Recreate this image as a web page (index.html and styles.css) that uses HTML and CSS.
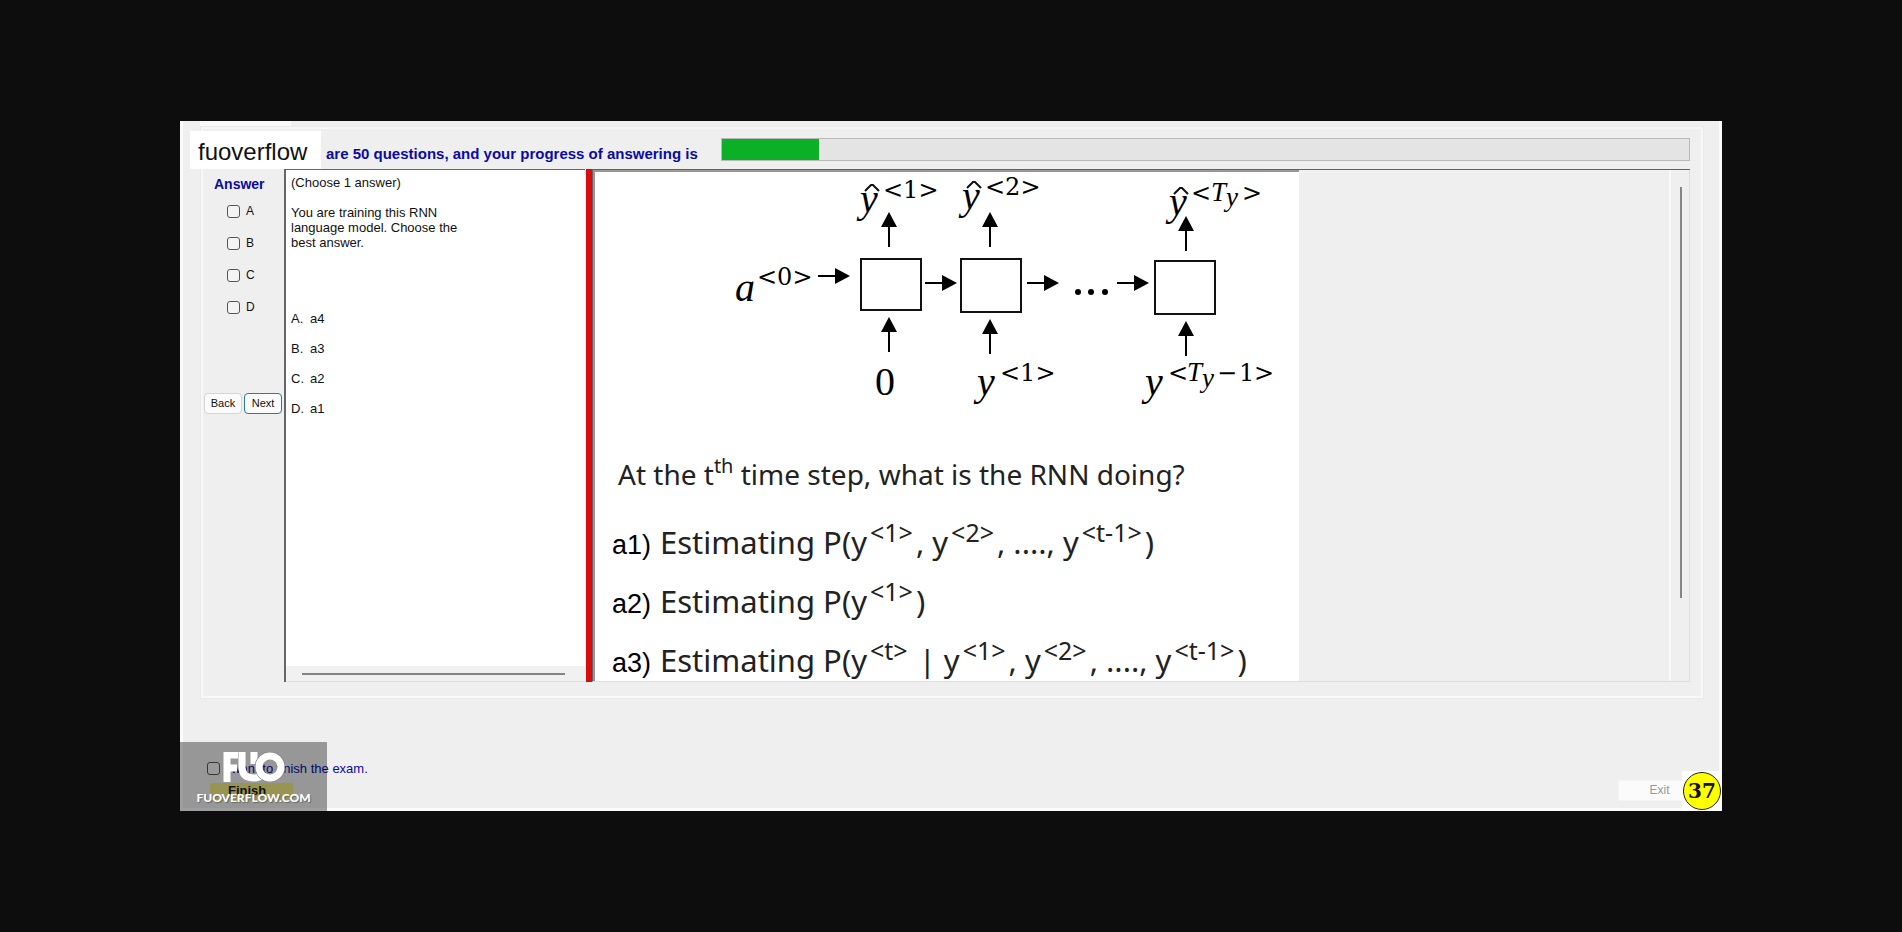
FILE: index.html
```html
<!DOCTYPE html>
<html lang="en">
<head>
<meta charset="utf-8">
<title>Exam</title>
<link rel="stylesheet" href="styles.css">
</head>
<body>
<main class="window">
  <div class="tab-strip"><span class="tab"></span></div>
  <section class="group">
    <header class="header">
      <h1 class="progress-text" id="progress-text">are 50 questions, and your progress of answering is</h1>
      <progress class="progress" value="5" max="50" aria-labelledby="progress-text"></progress>
    </header>
    <div class="workspace">
      <form class="answers">
        <h2 class="answers-title">Answer</h2>
        <div class="choices">
          <label class="choice"><input class="check" type="checkbox" name="a">A</label>
          <label class="choice"><input class="check" type="checkbox" name="b">B</label>
          <label class="choice"><input class="check" type="checkbox" name="c">C</label>
          <label class="choice"><input class="check" type="checkbox" name="d">D</label>
        </div>
        <div class="nav">
          <button class="button" type="button">Back</button>
          <button class="button button-active" type="button">Next</button>
        </div>
      </form>
      <section class="question">
        <div class="question-body">
          <p>(Choose 1 answer)</p>
          <p class="prompt">You are training this RNN language model. Choose the best answer.</p>
          <ul class="options">
            <li><span class="mark">A.</span>a4</li>
            <li><span class="mark">B.</span>a3</li>
            <li><span class="mark">C.</span>a2</li>
            <li><span class="mark">D.</span>a1</li>
          </ul>
        </div>
        <div class="hscroll"><span class="hthumb"></span></div>
      </section>
      <div class="splitter"></div>
      <section class="viewer">
        <article class="sheet">
          <svg class="diagram" viewBox="595 171 704 268" role="img" aria-label="Recurrent network diagram">
            <defs>
              <g id="up"><path d="M0 14V35" stroke="#000" stroke-width="2"/><path d="M0 0L8 15H-8Z"/></g>
              <g id="right"><path d="M0 0H18" stroke="#000" stroke-width="2"/><path d="M32 0L17 -8V8Z"/></g>
              <path id="hat" d="M0 6L6 0H8L14 6" fill="none" stroke="#111" stroke-width="2"/>
            </defs>
            <g fill="none" stroke="#111" stroke-width="2">
              <rect x="861" y="258" width="60" height="51"/>
              <rect x="961" y="258" width="60" height="53"/>
              <rect x="1155" y="260" width="60" height="53"/>
            </g>
            <use href="#up" x="889" y="211"/><use href="#up" x="990" y="211"/><use href="#up" x="1186" y="215"/>
            <use href="#up" x="889" y="316"/><use href="#up" x="990" y="318"/><use href="#up" x="1186" y="320"/>
            <use href="#right" x="818" y="275"/><use href="#right" x="925" y="282"/><use href="#right" x="1027" y="282"/><use href="#right" x="1117" y="282"/>
            <circle cx="1078" cy="291" r="3"/><circle cx="1091" cy="291" r="3"/><circle cx="1105" cy="291" r="3"/>
            <use href="#hat" x="865" y="184"/><use href="#hat" x="967" y="181"/><use href="#hat" x="1174" y="187"/>
            <g class="var">
              <text x="735" y="300">a</text>
              <text x="860" y="211">y</text>
              <text x="962" y="208">y</text>
              <text x="1169" y="214">y</text>
              <text x="977" y="394">y</text>
              <text x="1145" y="394">y</text>
            </g>
            <text class="zero" x="875" y="394">0</text>
            <g class="sup">
              <text x="757" y="284">&lt;0&gt;</text>
              <text x="883" y="197">&lt;1&gt;</text>
              <text x="985" y="194">&lt;2&gt;</text>
              <text x="1191" y="200">&lt;<tspan class="tee" x="1211">T</tspan><tspan class="wye" x="1226" y="205">y</tspan><tspan x="1242" y="200">&gt;</tspan></text>
              <text x="1000" y="380">&lt;1&gt;</text>
              <text x="1168" y="380">&lt;<tspan class="tee" x="1187">T</tspan><tspan class="wye" x="1202" y="386">y</tspan><tspan x="1217" y="380">−</tspan><tspan x="1239">1</tspan><tspan x="1254">&gt;</tspan></text>
            </g>
          </svg>
          <p class="ask">At the t<sup>th</sup> time step, what is the RNN doing?</p>
          <ul class="cases">
            <li><span class="case-mark">a1)</span>Estimating P(y<sup>&lt;1&gt;</sup>, y<sup>&lt;2&gt;</sup>, ...., y<sup>&lt;t-1&gt;</sup>)</li>
            <li><span class="case-mark">a2)</span>Estimating P(y<sup>&lt;1&gt;</sup>)</li>
            <li><span class="case-mark">a3)</span>Estimating P(y<sup>&lt;t&gt;</sup> | y<sup>&lt;1&gt;</sup>, y<sup>&lt;2&gt;</sup>, ...., y<sup>&lt;t-1&gt;</sup>)</li>
          </ul>
        </article>
        <div class="vscroll"><span class="vthumb"></span></div>
      </section>
    </div>
  </section>
  <footer class="footer">
    <div class="finish">
      <label class="finish-label"><input class="check" type="checkbox" name="finish">I want to finish the exam.</label>
      <button class="finish-button" type="button">Finish</button>
    </div>
    <button class="exit" type="button" disabled>Exit</button>
  </footer>
  <div class="name-tag">fuoverflow</div>
  <div class="watermark">
    <svg class="logo" viewBox="0 0 62 30" role="img" aria-label="FUO">
      <g fill="none" stroke="#fff">
        <path d="M4 30V3H15M4 16H14" stroke-width="7"/>
        <path d="M19 0V15Q19 26 31 26Q36 26 39 23M31 12V0" stroke-width="7"/>
        <circle cx="47" cy="15" r="15" stroke="#8a8a8a" stroke-width="1"/>
        <circle cx="47" cy="15" r="11" stroke-width="7"/>
      </g>
    </svg>
    <span class="site">FUOVERFLOW.COM</span>
  </div>
  <div class="badge"><span class="badge-disc">37</span></div>
</main>
</body>
</html>
```
FILE: styles.css
```css
* { box-sizing: border-box; }
body {
  margin: 0;
  min-height: 100vh;
  padding: 121px 180px;
  display: flex;
  background: #0d0d0d;
  color: #111;
  font: 13px/15px "Liberation Sans", Arial, sans-serif;
}
h1, h2, p, ul { margin: 0; padding: 0; }
ul { list-style: none; }
.window {
  position: relative;
  flex: 1;
  min-width: 0;
  display: flex;
  flex-direction: column;
  background: #efefef;
  border: solid #fbfbfb;
  border-width: 0 3px;
}
.tab-strip { height: 6px; padding-left: 17px; }
.tab { display: block; width: 91px; height: 6px; background: #fafafa; }
.group {
  flex: 1;
  display: flex;
  flex-direction: column;
  margin: 0 16px 0 18px;
  padding: 0 11px 14px 0;
  border: 2px solid #f8f8f8;
  outline: 1px solid #e9e9e9;
}
.header { display: flex; align-items: flex-start; height: 40px; padding: 9px 0 0 123px; }
.progress-text {
  flex: 0 0 395px;
  padding-top: 8px;
  white-space: nowrap;
  color: #0a0aa8;
  font-size: 15px;
  font-weight: bold;
}
.progress {
  appearance: none;
  flex: 1;
  min-width: 0;
  height: 23px;
  border: 1px solid #b9b9b9;
  background: #e4e4e4;
}
.progress::-webkit-progress-bar { background: #e4e4e4; }
.progress::-webkit-progress-value { background: #0bb026; }
.workspace { flex: 1; display: flex; min-height: 0; }
.answers { flex: 0 0 81px; }
.answers-title {
  padding: 8px 0 0 11px;
  color: #0a0aa8;
  font-size: 14px;
  font-weight: bold;
}
.choices { display: flex; flex-direction: column; gap: 17px; padding: 12px 0 0 24px; }
.choice { display: flex; align-items: center; gap: 6px; font-size: 12px; height: 15px; }
.check {
  appearance: none;
  width: 13px;
  height: 13px;
  margin: 0;
  border: 1px solid #555;
  border-radius: 3px;
  background: #f4f4f4;
}
.nav { display: flex; gap: 2px; padding: 78px 0 0 1px; }
.button {
  width: 38px;
  height: 21px;
  padding: 0;
  border: 1px solid #d4d4d4;
  border-radius: 4px;
  background: #fbfbfb;
  color: #111;
  font: 11px/15px "Liberation Sans", Arial, sans-serif;
}
.button-active { border-color: #2b7a9f; }
.question {
  flex: 0 0 301px;
  display: flex;
  flex-direction: column;
  border: solid #666;
  border-width: 1px 0 0 2px;
  background: #fff;
}
.question-body { flex: 1; padding: 5px; }
.prompt { width: 168px; padding-top: 15px; }
.options { display: flex; flex-direction: column; gap: 15px; padding-top: 61px; }
.mark { display: inline-block; width: 19px; }
.hscroll {
  height: 16px;
  padding: 7px 20px 0 16px;
  background: #f1f1f1;
  border-bottom: 1px solid #ddd;
}
.hthumb { display: block; height: 2px; background: #858585; }
.splitter { flex: 0 0 6px; margin-left: 1px; background: #dd0c0c; }
.viewer {
  flex: 1;
  min-width: 0;
  display: flex;
  justify-content: space-between;
  border: solid #636366;
  border-width: 1px 0 0 1px;
  border-bottom: 1px solid #ddd;
}
.sheet {
  flex: 0 0 706px;
  border: solid #98989b;
  border-width: 2px 0 0 2px;
  background: #fff;
  color: #222;
  font: 28px/40px "Noto Sans", sans-serif;
}
.diagram { display: block; width: 100%; }
.var, .zero { font: 40px "Liberation Serif", serif; }
.var { font-style: italic; }
.sup { font: 24px "DejaVu Serif", serif; }
.tee { font: italic 27px "Liberation Serif", serif; }
.wye { font: italic 27px "Liberation Serif", serif; }
.ask { padding: 14px 0 0 23px; white-space: nowrap; }
.ask sup { font-size: 20px; line-height: 0; vertical-align: 12px; }
.cases {
  display: flex;
  flex-direction: column;
  gap: 19px;
  padding: 28px 0 0 17px;
  font-size: 31px;
  line-height: 40px;
  white-space: nowrap;
}
.cases li { height: 40px; }
.cases sup { margin: 0 3px; font-size: 25px; line-height: 0; vertical-align: 12px; }
.case-mark {
  display: inline-block;
  width: 48px;
  color: #000;
  font: 27px/40px "Liberation Sans", Arial, sans-serif;
}
.vscroll {
  width: 21px;
  padding: 17px 0 83px 9px;
  border: solid #f8f8f8;
  border-width: 0 0 0 2px;
  border-right: 1px solid #ddd;
}
.vthumb { display: block; width: 2px; height: 100%; background: #858585; }
.footer {
  height: 113px;
  display: flex;
  justify-content: space-between;
  align-items: flex-end;
  padding: 0 0 7px 24px;
  border-bottom: 3px solid #fbfbfb;
}
.finish { display: flex; flex-direction: column; gap: 7px; }
.finish-label { display: flex; align-items: center; gap: 4px; color: #0a0aa8; }
.finish-button {
  width: 83px;
  height: 18px;
  margin-left: 3px;
  padding: 0 0 3px 18px;
  border: 0;
  background: #f0ec80;
  color: #222;
  text-align: left;
  font: bold 13px/15px "Liberation Sans", Arial, sans-serif;
}
.exit {
  width: 101px;
  height: 21px;
  padding: 0 18px 0 0;
  border: 1px solid #f5f5f5;
  background: #fbfbfb;
  color: #999;
  font: 12px/15px "Liberation Sans", Arial, sans-serif;
}
.name-tag {
  position: absolute;
  left: 7px;
  top: 10px;
  padding: 6px 14px 2px 8px;
  background: #fff;
  color: #111;
  font-size: 24px;
  line-height: 30px;
}
.watermark {
  position: absolute;
  left: -3px;
  bottom: 0;
  width: 147px;
  height: 69px;
  display: flex;
  flex-direction: column;
  align-items: center;
  gap: 6px;
  padding-top: 10px;
  background: rgba(0, 0, 0, 0.37);
}
.logo { width: 62px; height: 30px; }
.site {
  color: #fff;
  font: 900 12px/20px Impact, Lato, sans-serif;
  text-shadow: 1px 1px 1px #666;
}
.badge {
  position: absolute;
  right: -3px;
  bottom: 0;
  padding: 1px;
  background: #fff;
}
.badge-disc {
  display: block;
  width: 38px;
  height: 38px;
  border: 1px solid #222;
  border-radius: 50%;
  background: #ff0;
  color: #111;
  text-align: center;
  font: bold 20px/36px "DejaVu Serif", serif;
}
```
